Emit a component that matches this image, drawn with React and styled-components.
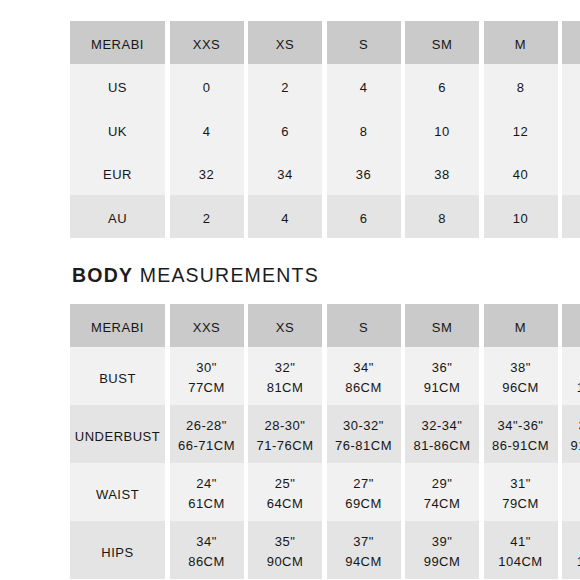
import styled, { createGlobalStyle } from 'styled-components';

const GlobalStyle = createGlobalStyle`
  body {
    margin: 0;
    background: #fff;
    font-family: "Liberation Sans", Arial, sans-serif;
    color: #222;
  }
`;

const sizes = ['XXS', 'XS', 'S', 'SM', 'M', 'L'];

const conversions = [
  { label: 'US', tone: 'light', values: ['0', '2', '4', '6', '8', '10'] },
  { label: 'UK', tone: 'light', values: ['4', '6', '8', '10', '12', '14'] },
  { label: 'EUR', tone: 'light', values: ['32', '34', '36', '38', '40', '42'] },
  { label: 'AU', tone: 'dark', values: ['2', '4', '6', '8', '10', '12'] },
];

const measurements = [
  { label: 'BUST', tone: 'light', values: [['30"', '77CM'], ['32"', '81CM'], ['34"', '86CM'], ['36"', '91CM'], ['38"', '96CM'], ['40"', '101CM']] },
  { label: 'UNDERBUST', tone: 'dark', values: [['26-28"', '66-71CM'], ['28-30"', '71-76CM'], ['30-32"', '76-81CM'], ['32-34"', '81-86CM'], ['34"-36"', '86-91CM'], ['36-38"', '91-96CM']] },
  { label: 'WAIST', tone: 'light', values: [['24"', '61CM'], ['25"', '64CM'], ['27"', '69CM'], ['29"', '74CM'], ['31"', '79CM'], ['33"', '84CM']] },
  { label: 'HIPS', tone: 'dark', values: [['34"', '86CM'], ['35"', '90CM'], ['37"', '94CM'], ['39"', '99CM'], ['41"', '104CM'], ['43"', '109CM']] },
];

const tones = {
  head: '#cacaca',
  light: '#f1f1f1',
  dark: '#e4e4e4',
};

export default function App() {
  return (
    <>
      <GlobalStyle />
      <Page>
        <Table>
          <Row>
            <Cell $tone="head" $h={43}>MERABI</Cell>
            {sizes.map((s) => (
              <Cell key={s} $tone="head" $h={43}>{s}</Cell>
            ))}
          </Row>
          {conversions.map((row) => (
            <Row key={row.label}>
              <Cell $tone={row.tone} $h={43.5}>{row.label}</Cell>
              {row.values.map((v, i) => (
                <Cell key={i} $tone={row.tone} $h={43.5}>{v}</Cell>
              ))}
            </Row>
          ))}
        </Table>

        <Title>
          <strong>BODY</strong> MEASUREMENTS
        </Title>

        <Table>
          <Row>
            <Cell $tone="head" $h={43}>MERABI</Cell>
            {sizes.map((s) => (
              <Cell key={s} $tone="head" $h={43}>{s}</Cell>
            ))}
          </Row>
          {measurements.map((row) => (
            <Row key={row.label}>
              <Cell $tone={row.tone} $h={58}>{row.label}</Cell>
              {row.values.map(([inch, cm], i) => (
                <Cell key={i} $tone={row.tone} $h={58}>
                  <Lines>
                    <span>{inch}</span>
                    <span>{cm}</span>
                  </Lines>
                </Cell>
              ))}
            </Row>
          ))}
        </Table>
      </Page>
    </>
  );
}

const Page = styled.main`
  padding: 21px 0 0 70px;
  width: 580px;
  height: 580px;
  box-sizing: border-box;
  overflow: hidden;
`;

const Table = styled.div`
  display: flex;
  flex-direction: column;
`;

const Row = styled.div`
  display: grid;
  grid-template-columns: 95px repeat(6, 74px);
  column-gap: 4.5px;
`;

const Cell = styled.div`
  height: ${(p) => p.$h}px;
  box-sizing: border-box;
  padding-top: 4px;
  background: ${(p) => tones[p.$tone]};
  display: flex;
  align-items: center;
  justify-content: center;
  font-size: 13px;
  letter-spacing: 0.5px;
  color: #161616;
  white-space: nowrap;
`;

const Lines = styled.div`
  display: flex;
  flex-direction: column;
  align-items: center;
  line-height: 20px;
`;

const Title = styled.h2`
  margin: 0;
  padding: 26px 0 18px 2px;
  font-size: 19.5px;
  line-height: 22px;
  font-weight: 400;
  letter-spacing: 1.2px;
  color: #1c1c1c;

  strong {
    font-weight: 700;
  }
`;
